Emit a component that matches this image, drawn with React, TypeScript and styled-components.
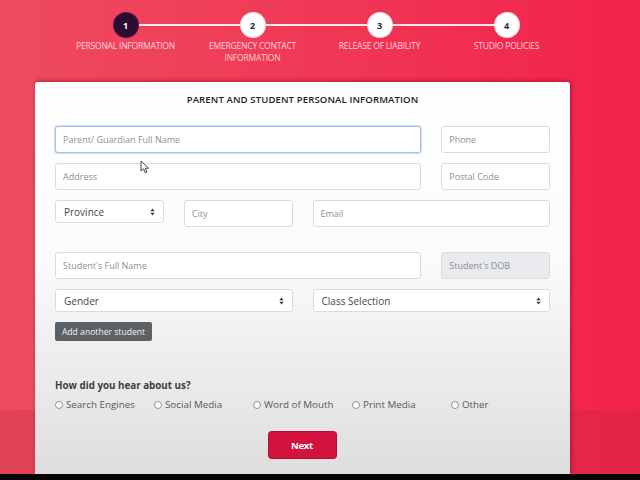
import React from "react";
import styled, { createGlobalStyle, css } from "styled-components";

const Global = createGlobalStyle`
  html, body { margin: 0; padding: 0; }
  body { font-family: "Open Sans", "Liberation Sans", sans-serif; }
  * { box-sizing: border-box; }
`;

const Page = styled.div`
  position: relative;
  width: 640px;
  height: 480px;
  overflow: hidden;
  display: flex;
  flex-direction: column;
  background:
    linear-gradient(to bottom, transparent 410px, rgba(180, 40, 55, 0.22) 410px),
    linear-gradient(to right, #ee4b5f 0%, #f03a57 45%, #f2224c 100%);
`;

const Stepper = styled.div`
  display: flex;
  padding: 13px 0 0 62px;
  height: 82px;
  flex-shrink: 0;
`;

const Step = styled.div<{ $last?: boolean }>`
  position: relative;
  width: 127px;
  display: flex;
  flex-direction: column;
  align-items: center;
  ${(p) =>
    !p.$last &&
    css`
      &::before {
        content: "";
        position: absolute;
        top: 11px;
        left: 50%;
        width: 100%;
        height: 2px;
        background: #fbe9ec;
      }
    `}
`;

const Circle = styled.div<{ $active?: boolean }>`
  position: relative;
  z-index: 1;
  width: 24px;
  height: 24px;
  border-radius: 50%;
  display: flex;
  align-items: center;
  justify-content: center;
  font-size: 9px;
  font-weight: 700;
  background: ${(p) => (p.$active ? "#2e0b31" : "#ffffff")};
  color: ${(p) => (p.$active ? "#ffffff" : "#2a2a2a")};
  box-shadow: 0 0 0 1px ${(p) => (p.$active ? "#4a1a44" : "#f7d7dc")};
`;

const StepLabel = styled.div`
  margin-top: 3px;
  font-size: 8.6px;
  line-height: 12px;
  color: #fbd0d7;
  text-transform: uppercase;
  text-align: center;
  letter-spacing: -0.25px;
  width: 126px;
`;

const Card = styled.div`
  margin-left: 35px;
  width: 535px;
  flex: 1;
  background: linear-gradient(to bottom, #ffffff 0%, #fbfbfb 45%, #dedede 100%);
  border-radius: 3px 3px 0 0;
  box-shadow: 1px -1px 4px rgba(80, 0, 20, 0.45);
  padding: 11px 20px 0;
  display: flex;
  flex-direction: column;
`;

const Title = styled.h2`
  margin: 0;
  font-size: 9.6px;
  line-height: 14px;
  font-weight: 600;
  text-align: center;
  color: #1e1e1e;
  letter-spacing: 0.1px;
`;

const Row = styled.div<{ $mt: number }>`
  display: grid;
  grid-template-columns: repeat(4, 1fr);
  column-gap: 20px;
  align-items: start;
  margin-top: ${(p) => p.$mt}px;
`;

const Input = styled.input<{ $span?: number; $focused?: boolean; $disabled?: boolean }>`
  grid-column: span ${(p) => p.$span || 1};
  height: 27px;
  width: 100%;
  border: 1px solid ${(p) => (p.$focused ? "#a9c4e2" : "#d9dcdf")};
  box-shadow: ${(p) => (p.$focused ? "0 0 0 1px rgba(150,185,225,0.45)" : "none")};
  border-radius: 3px;
  background: ${(p) => (p.$disabled ? "#e8eaed" : "#ffffff")};
  padding: 0 7px;
  font-family: "Open Sans", "Liberation Sans", sans-serif;
  font-size: 9px;
  color: #444;
  outline: none;
  &::placeholder {
    color: #8b9096;
  }
`;

const SelectBox = styled.div<{ $span?: number }>`
  grid-column: span ${(p) => p.$span || 1};
  height: 23px;
  border: 1px solid #d9dcdf;
  border-radius: 3px;
  background: #ffffff;
  padding: 0 8px 0 8px;
  display: flex;
  align-items: center;
  justify-content: space-between;
  font-size: 10px;
  color: #41464b;
`;

const GrayButton = styled.button`
  align-self: flex-start;
  margin-top: 10px;
  height: 19px;
  width: 97px;
  padding: 0;
  border: none;
  border-radius: 2px;
  background: #5c6166;
  color: #f2f2f2;
  font-family: "Open Sans", "Liberation Sans", sans-serif;
  font-size: 8.6px;
`;

const Question = styled.div`
  margin-top: 38px;
  font-size: 9.8px;
  line-height: 14px;
  font-weight: 700;
  color: #3a3f44;
`;

const RadioGroup = styled.div`
  margin-top: 5px;
  display: grid;
  grid-template-columns: repeat(5, 99px);
`;

const RadioItem = styled.label`
  display: flex;
  align-items: center;
  gap: 3px;
  font-size: 9.8px;
  line-height: 14px;
  color: #555a60;
`;

const RadioDot = styled.span`
  width: 8px;
  height: 8px;
  border-radius: 50%;
  border: 1px solid #8d9297;
  background: #fff;
  flex-shrink: 0;
`;

const NextButton = styled.button`
  align-self: center;
  margin: 20px 0 0 -1px;
  width: 67px;
  height: 26px;
  border: none;
  border-radius: 3px;
  background: #d4123e;
  box-shadow: 0 0 0 1px #b80d33;
  color: #fff;
  font-family: "Open Sans", "Liberation Sans", sans-serif;
  font-weight: 700;
  font-size: 9.6px;
  letter-spacing: -0.3px;
`;

const BlackBar = styled.div`
  height: 6px;
  flex-shrink: 0;
  background: #050505;
`;

const Cursor = styled.svg`
  position: absolute;
  left: 140px;
  top: 160px;
`;

const Arrows = () => (
  <svg width="5" height="8" viewBox="0 0 5 8">
    <path d="M2.5 0.5 L4.6 3.2 L0.4 3.2 Z" fill="#333" />
    <path d="M2.5 7.5 L4.6 4.8 L0.4 4.8 Z" fill="#333" />
  </svg>
);

const steps = [
  { n: 1, label: "Personal Information" },
  { n: 2, label: "Emergency Contact Information" },
  { n: 3, label: "Release of Liability" },
  { n: 4, label: "Studio Policies" },
];

const sources = ["Search Engines", "Social Media", "Word of Mouth", "Print Media", "Other"];

export default function App() {
  return (
    <Page>
      <Global />
      <Stepper>
        {steps.map((s, i) => (
          <Step key={s.n} $last={i === steps.length - 1}>
            <Circle $active={i === 0}>{s.n}</Circle>
            <StepLabel>{s.n === 2 ? <>Emergency Contact<br />Information</> : s.label}</StepLabel>
          </Step>
        ))}
      </Stepper>
      <Card>
        <Title>PARENT AND STUDENT PERSONAL INFORMATION</Title>
        <Row $mt={19}>
          <Input $span={3} $focused placeholder="Parent/ Guardian Full Name" />
          <Input placeholder="Phone" />
        </Row>
        <Row $mt={10}>
          <Input $span={3} placeholder="Address" />
          <Input placeholder="Postal Code" />
        </Row>
        <Row $mt={10}>
          <SelectBox>
            <span>Province</span>
            <Arrows />
          </SelectBox>
          <Input placeholder="City" />
          <Input $span={2} placeholder="Email" />
        </Row>
        <Row $mt={25}>
          <Input $span={3} placeholder="Student's Full Name" />
          <Input $disabled placeholder="Student's DOB" />
        </Row>
        <Row $mt={10}>
          <SelectBox $span={2}>
            <span>Gender</span>
            <Arrows />
          </SelectBox>
          <SelectBox $span={2}>
            <span>Class Selection</span>
            <Arrows />
          </SelectBox>
        </Row>
        <GrayButton>Add another student</GrayButton>
        <Question>How did you hear about us?</Question>
        <RadioGroup>
          {sources.map((s) => (
            <RadioItem key={s}>
              <RadioDot />
              {s}
            </RadioItem>
          ))}
        </RadioGroup>
        <NextButton>Next</NextButton>
      </Card>
      <BlackBar />
      <Cursor width="10" height="14" viewBox="0 0 10 14">
        <path d="M1 1 L1 11 L3.5 8.8 L5.3 12.8 L6.9 12.1 L5.2 8.2 L8.5 8.2 Z" fill="#fff" stroke="#333" strokeWidth="0.9" strokeLinejoin="round" />
      </Cursor>
    </Page>
  );
}
